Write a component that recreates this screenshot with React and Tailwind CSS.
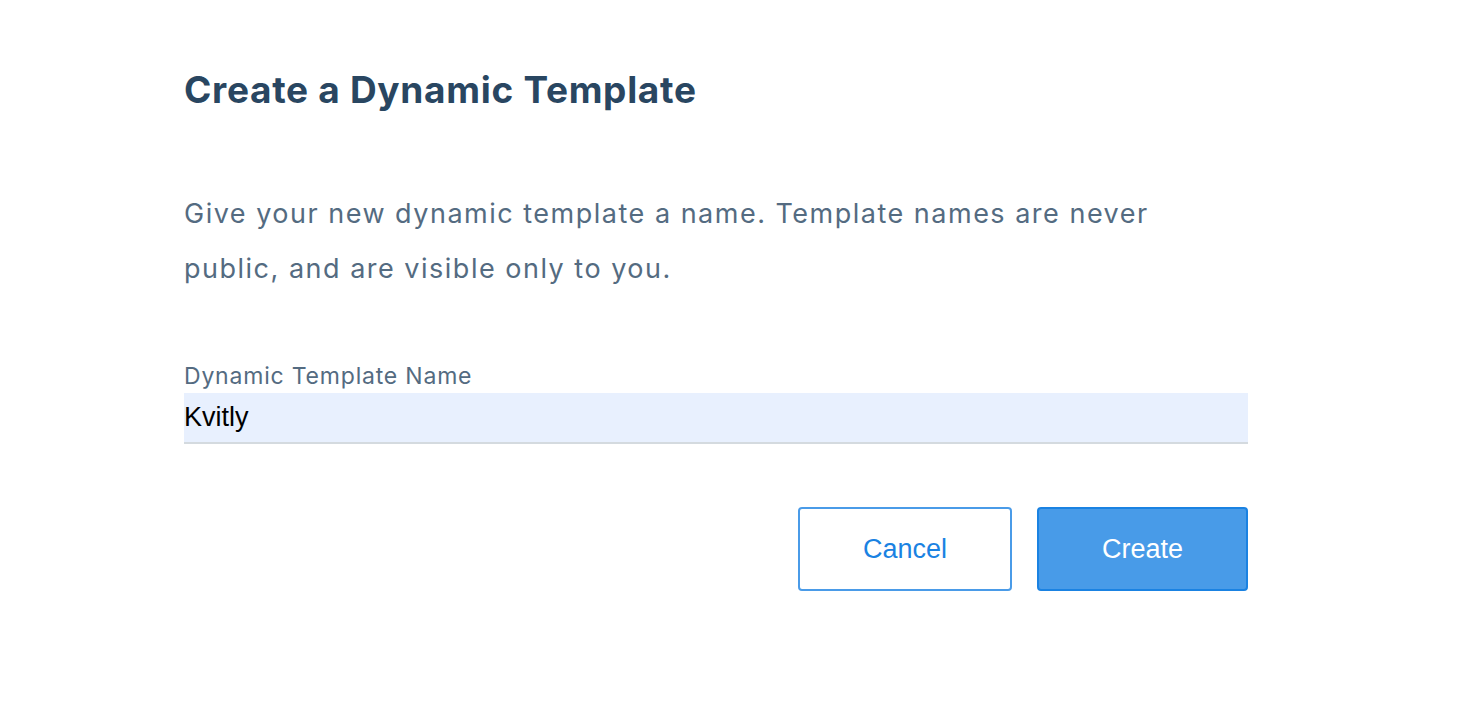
import React from 'react';

export default function App() {
  return (
    <div className="min-h-[705px] w-full bg-white">
      <div className="ml-[184px] w-[1064px] pt-[66px] font-['Inter',sans-serif]">
        <h1 className="text-[37px] font-bold leading-[48px] tracking-[0.7px] text-[#294661]">
          Create a Dynamic Template
        </h1>

        <p className="mt-[72px] w-[1000px] text-[27px] leading-[55px] tracking-[1.5px] text-[#546b81]">
          Give your new dynamic template a name. Template names are never public, and are visible only to you.
        </p>

        <div className="mt-[63px]">
          <label className="block text-[23px] leading-[34px] tracking-[0.8px] text-[#546b81]">Dynamic Template Name</label>
          <input
            type="text"
            defaultValue="Kvitly"
            className="block h-[51px] w-full border-b-2 border-[#d4dadf] bg-[#e8f0fe] px-0 font-['Liberation_Sans',sans-serif] text-[27px] text-black outline-none"
          />
        </div>

        <div className="mt-[63px] flex justify-end gap-[25px]">
          <button
            type="button"
            className="h-[84px] w-[214px] rounded-[4px] border-2 border-[#4a9be8] bg-white font-['Liberation_Sans',sans-serif] text-[27px] text-[#1a82e2]"
          >
            Cancel
          </button>
          <button
            type="button"
            className="h-[84px] w-[211px] rounded-[4px] border-2 border-[#1a82e2] bg-[#489be8] font-['Liberation_Sans',sans-serif] text-[27px] text-white"
          >
            Create
          </button>
        </div>
      </div>
    </div>
  );
}
